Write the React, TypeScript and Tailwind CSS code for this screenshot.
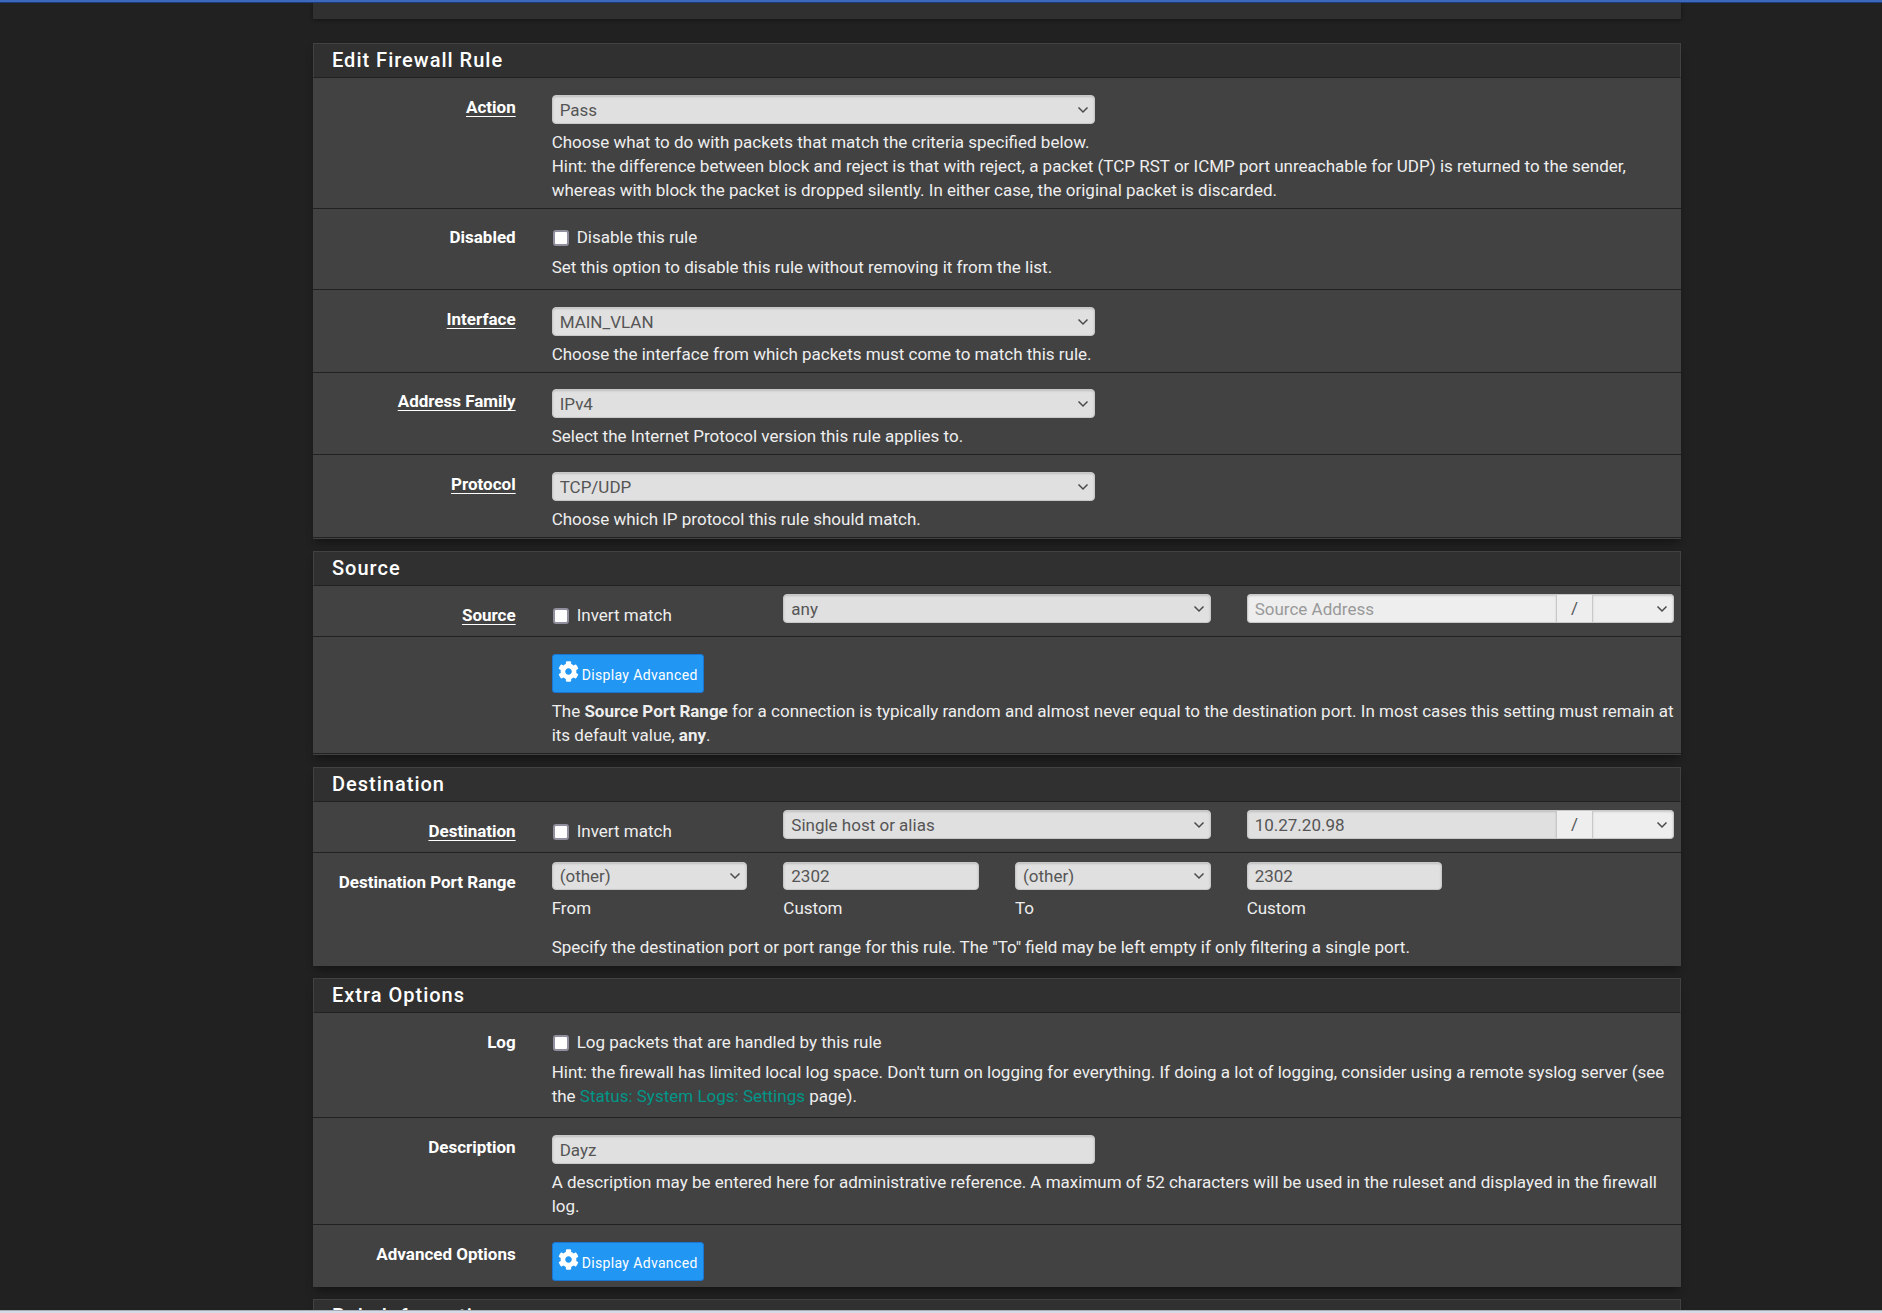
import type { ReactNode } from "react";
import { FaCog } from "react-icons/fa";

const field =
  "block w-full border border-[#c8c8c8] bg-[#e0e0e0] px-[7px] text-[17px] leading-6 text-[#555] shadow-[inset_0_1px_2px_rgba(0,0,0,0.15)] outline-none";

function Panel({ title, children }: { title: string; children?: ReactNode }) {
  return (
    <section className="mb-3 shrink-0 border-b border-[#424242] bg-[#424242] shadow-[0_6px_8px_-2px_rgba(0,0,0,0.35)]">
      <h2 className="border border-[#424242] border-b-[#212121] bg-[#303030] px-[18px] py-1 text-xl leading-[25px] font-medium tracking-wider text-white">
        {title}
      </h2>
      {children}
    </section>
  );
}

function Row({
  label,
  htmlFor,
  required,
  labelClass = "",
  className = "pt-[17px] pb-1.5",
  last,
  children,
}: {
  label?: string;
  htmlFor?: string;
  required?: boolean;
  labelClass?: string;
  className?: string;
  last?: boolean;
  children: ReactNode;
}) {
  return (
    <div className={`${last ? "" : "border-b border-[#212121]"} ${className}`}>
      <div className="-mx-[11px] grid grid-cols-12">
        <div className={`col-span-2 px-[18px] text-right font-bold text-white ${labelClass}`}>
          {label && (
            <label
              htmlFor={htmlFor}
              className={
                required ? "underline decoration-1 underline-offset-[3px] [text-decoration-skip-ink:none]" : ""
              }
            >
              {label}
            </label>
          )}
        </div>
        <div className="col-span-10 grid grid-cols-10">{children}</div>
      </div>
    </div>
  );
}

function Select({
  id,
  value,
  label,
  className = "h-[29px]",
  tone = "rounded-[4px]",
}: {
  id: string;
  value: string;
  label?: string;
  className?: string;
  tone?: string;
}) {
  return (
    <div className="relative">
      <select id={id} aria-label={label} className={`${field} appearance-none ${className} ${tone}`}>
        <option>{value}</option>
      </select>
      <svg
        viewBox="0 0 12 8"
        className="pointer-events-none absolute top-1/2 right-1.5 h-2 w-3 -translate-y-1/2"
        fill="none"
        stroke="#4a4a4a"
        strokeWidth="1.5"
      >
        <path d="M1.5 1.5 6 6l4.5-4.5" />
      </svg>
    </div>
  );
}

function Help({ children, className = "mt-1.5" }: { children: ReactNode; className?: string }) {
  return <p className={`col-span-10 px-[18px] ${className}`}>{children}</p>;
}

function Check({ id, children }: { id: string; children: ReactNode }) {
  return (
    <label htmlFor={id} className="flex items-center gap-2 pl-px">
      <input
        id={id}
        type="checkbox"
        className="mt-px size-4 appearance-none rounded-[3px] border-2 border-[#8f8f9d] bg-white"
      />
      {children}
    </label>
  );
}

function AdvancedButton({ id }: { id?: string }) {
  return (
    <button
      id={id}
      type="button"
      className="flex h-[39px] items-center gap-[3px] rounded-[3px] border border-[#1976d2] bg-[#2196f3] px-[5px] text-sm tracking-wide whitespace-nowrap text-white"
    >
      <FaCog className="mb-1 size-[21px]" />
      <span className="mt-0.5">Display Advanced</span>
    </button>
  );
}

function AddressGroup({ id, value, placeholder }: { id: string; value?: string; placeholder?: string }) {
  return (
    <div className="flex">
      <input
        id={id}
        aria-label="Address"
        defaultValue={value}
        placeholder={placeholder}
        className={`${field} h-[29px] min-w-0 flex-1 rounded-l-[4px] border-r-0 placeholder:text-[#999] placeholder-shown:bg-[#eee]`}
      />
      <span className="h-[29px] w-[37px] border border-[#c8c8c8] bg-[#eee] text-center leading-[27px] text-[#555]">
        /
      </span>
      <div className="w-[81px]">
        <Select id={`${id}-mask`} label="Mask" value="" tone="rounded-r-[4px] border-l-0 !bg-[#eee]" />
      </div>
    </div>
  );
}

const ports = [
  { id: "port-from", caption: "From", select: true, value: "(other)" },
  { id: "port-from-custom", caption: "Custom", select: false, value: "2302" },
  { id: "port-to", caption: "To", select: true, value: "(other)" },
  { id: "port-to-custom", caption: "Custom", select: false, value: "2302" },
];

export default function App() {
  return (
    <div className="flex h-screen flex-col overflow-hidden bg-[#212121] font-[Roboto,sans-serif] text-[17px] leading-6 text-[#eee]">
      <div className="h-[3px] shrink-0 border-b border-[#1c3a7c] bg-[#3d69bd]" />

      <main className="flex min-h-0 flex-1 flex-col overflow-hidden pr-[201px] pl-[313px]">
        <div className="mb-6 h-4 shrink-0 bg-[#303030] shadow-[0_1px_4px_rgba(0,0,0,0.4)]" />

        <Panel title="Edit Firewall Rule">
          <Row label="Action" htmlFor="action" required>
            <div className="col-span-5 px-[18px]">
              <Select id="action" value="Pass" />
            </div>
            <Help>
              Choose what to do with packets that match the criteria specified below.
              <br />
              Hint: the difference between block and reject is that with reject, a packet (TCP RST or ICMP port
              unreachable for UDP) is returned to the sender, whereas with block the packet is dropped silently. In
              either case, the original packet is discarded.
            </Help>
          </Row>
          <Row label="Disabled" htmlFor="disabled" className="pt-4 pb-2.5">
            <div className="col-span-10 px-[18px]">
              <Check id="disabled">Disable this rule</Check>
            </div>
            <Help>Set this option to disable this rule without removing it from the list.</Help>
          </Row>
          <Row label="Interface" htmlFor="interface" required>
            <div className="col-span-5 px-[18px]">
              <Select id="interface" value="MAIN_VLAN" />
            </div>
            <Help>Choose the interface from which packets must come to match this rule.</Help>
          </Row>
          <Row label="Address Family" htmlFor="family" required className="pt-4 pb-1.5">
            <div className="col-span-5 px-[18px]">
              <Select id="family" value="IPv4" />
            </div>
            <Help>Select the Internet Protocol version this rule applies to.</Help>
          </Row>
          <Row label="Protocol" htmlFor="protocol" required>
            <div className="col-span-5 px-[18px]">
              <Select id="protocol" value="TCP/UDP" />
            </div>
            <Help>Choose which IP protocol this rule should match.</Help>
          </Row>
        </Panel>

        <Panel title="Source">
          <Row label="Source" htmlFor="source-type" required labelClass="pt-[9px]" className="pt-2 pb-[9px]">
            <div className="col-span-2 px-[18px] pt-[9px]">
              <Check id="source-invert">Invert match</Check>
            </div>
            <div className="col-span-4 px-[18px]">
              <Select id="source-type" value="any" />
            </div>
            <div className="col-span-4 px-[18px]">
              <AddressGroup id="source-address" placeholder="Source Address" />
            </div>
          </Row>
          <Row>
            <div className="col-span-10 px-[18px]">
              <AdvancedButton />
            </div>
            <Help>
              The <b>Source Port Range</b> for a connection is typically random and almost never equal to the
              destination port. In most cases this setting must remain at its default value, <b>any</b>.
            </Help>
          </Row>
        </Panel>

        <Panel title="Destination">
          <Row label="Destination" htmlFor="dest-type" required labelClass="pt-[9px]" className="pt-2 pb-[9px]">
            <div className="col-span-2 px-[18px] pt-[9px]">
              <Check id="dest-invert">Invert match</Check>
            </div>
            <div className="col-span-4 px-[18px]">
              <Select id="dest-type" value="Single host or alias" />
            </div>
            <div className="col-span-4 px-[18px]">
              <AddressGroup id="dest-address" value="10.27.20.98" />
            </div>
          </Row>
          <Row label="Destination Port Range" htmlFor="port-from" labelClass="pt-2" className="pt-[9px] pb-1.5" last>
            {ports.map((p) => (
              <div key={p.id} className="col-span-2 px-[18px]">
                {p.select ? (
                  <Select id={p.id} label={p.caption} value={p.value} className="h-7" />
                ) : (
                  <input
                    id={p.id}
                    aria-label={p.caption}
                    defaultValue={p.value}
                    className={`${field} h-7 rounded-[4px]`}
                  />
                )}
                <span className="mt-1.5 block">{p.caption}</span>
              </div>
            ))}
            <Help className="mt-[15px]">
              Specify the destination port or port range for this rule. The "To" field may be left empty if only
              filtering a single port.
            </Help>
          </Row>
        </Panel>

        <Panel title="Extra Options">
          <Row label="Log" htmlFor="log" className="pt-[17px] pb-[9px]">
            <div className="col-span-10 px-[18px]">
              <Check id="log">Log packets that are handled by this rule</Check>
            </div>
            <Help>
              Hint: the firewall has limited local log space. Don't turn on logging for everything. If doing a lot of
              logging, consider using a remote syslog server (see the{" "}
              <a href="#" className="text-[#009688]">
                Status: System Logs: Settings
              </a>{" "}
              page).
            </Help>
          </Row>
          <Row label="Description" htmlFor="description">
            <div className="col-span-5 px-[18px]">
              <input id="description" defaultValue="Dayz" className={`${field} h-[29px] rounded-[4px]`} />
            </div>
            <Help>
              A description may be entered here for administrative reference. A maximum of 52 characters will be used
              in the ruleset and displayed in the firewall log.
            </Help>
          </Row>
          <Row label="Advanced Options" htmlFor="advanced" className="pt-[17px] pb-[5px]" last>
            <div className="col-span-10 px-[18px]">
              <AdvancedButton id="advanced" />
            </div>
          </Row>
        </Panel>

        <Panel title="Rule Information" />
      </main>

      <div className="h-[3px] shrink-0 border-t border-[#a9adb8] bg-[#d5dae6]" />
    </div>
  );
}
